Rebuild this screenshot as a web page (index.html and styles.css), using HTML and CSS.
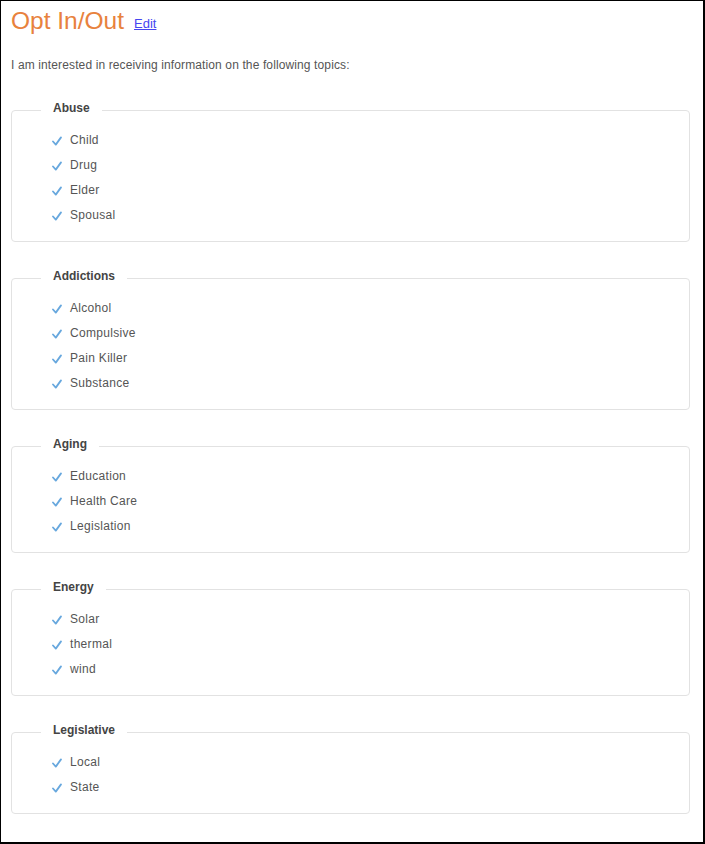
FILE: index.html
```html
<!DOCTYPE html>
<html>
<head>
<meta charset="utf-8">
<link rel="stylesheet" href="styles.css">
</head>
<body>
<div class="frame">
  <div class="header">
    <h1 class="title">Opt In/Out</h1>
    <a class="edit" href="#">Edit</a>
  </div>
  <p class="intro">I am interested in receiving information on the following topics:</p>

  <fieldset class="group">
    <legend>Abuse</legend>
    <ul class="items">
      <li><svg class="check" viewBox="0 0 10 10"><path d="M1 5.5 L3.8 8.6 L9 1.4"/></svg>Child</li>
      <li><svg class="check" viewBox="0 0 10 10"><path d="M1 5.5 L3.8 8.6 L9 1.4"/></svg>Drug</li>
      <li><svg class="check" viewBox="0 0 10 10"><path d="M1 5.5 L3.8 8.6 L9 1.4"/></svg>Elder</li>
      <li><svg class="check" viewBox="0 0 10 10"><path d="M1 5.5 L3.8 8.6 L9 1.4"/></svg>Spousal</li>
    </ul>
  </fieldset>

  <fieldset class="group">
    <legend>Addictions</legend>
    <ul class="items">
      <li><svg class="check" viewBox="0 0 10 10"><path d="M1 5.5 L3.8 8.6 L9 1.4"/></svg>Alcohol</li>
      <li><svg class="check" viewBox="0 0 10 10"><path d="M1 5.5 L3.8 8.6 L9 1.4"/></svg>Compulsive</li>
      <li><svg class="check" viewBox="0 0 10 10"><path d="M1 5.5 L3.8 8.6 L9 1.4"/></svg>Pain Killer</li>
      <li><svg class="check" viewBox="0 0 10 10"><path d="M1 5.5 L3.8 8.6 L9 1.4"/></svg>Substance</li>
    </ul>
  </fieldset>

  <fieldset class="group">
    <legend>Aging</legend>
    <ul class="items">
      <li><svg class="check" viewBox="0 0 10 10"><path d="M1 5.5 L3.8 8.6 L9 1.4"/></svg>Education</li>
      <li><svg class="check" viewBox="0 0 10 10"><path d="M1 5.5 L3.8 8.6 L9 1.4"/></svg>Health Care</li>
      <li><svg class="check" viewBox="0 0 10 10"><path d="M1 5.5 L3.8 8.6 L9 1.4"/></svg>Legislation</li>
    </ul>
  </fieldset>

  <fieldset class="group">
    <legend>Energy</legend>
    <ul class="items">
      <li><svg class="check" viewBox="0 0 10 10"><path d="M1 5.5 L3.8 8.6 L9 1.4"/></svg>Solar</li>
      <li><svg class="check" viewBox="0 0 10 10"><path d="M1 5.5 L3.8 8.6 L9 1.4"/></svg>thermal</li>
      <li><svg class="check" viewBox="0 0 10 10"><path d="M1 5.5 L3.8 8.6 L9 1.4"/></svg>wind</li>
    </ul>
  </fieldset>

  <fieldset class="group">
    <legend>Legislative</legend>
    <ul class="items">
      <li><svg class="check" viewBox="0 0 10 10"><path d="M1 5.5 L3.8 8.6 L9 1.4"/></svg>Local</li>
      <li><svg class="check" viewBox="0 0 10 10"><path d="M1 5.5 L3.8 8.6 L9 1.4"/></svg>State</li>
    </ul>
  </fieldset>
</div>
</body>
</html>
```

FILE: styles.css
```css
html, body {
  margin: 0;
  padding: 0;
  background: #fff;
}

body {
  font-family: "Liberation Sans", Arial, sans-serif;
  color: #555;
}

.frame {
  box-sizing: border-box;
  width: 705px;
  height: 844px;
  border-style: solid;
  border-color: #000;
  border-width: 1px 2px 2px 1px;
  padding: 0 13px 0 10px;
  overflow: hidden;
}

.header {
  display: flex;
  align-items: flex-start;
  gap: 10px;
  height: 43px;
}

.title {
  margin: 0;
  font-size: 24.5px;
  font-weight: normal;
  line-height: 40px;
  color: #e8823d;
}

.edit {
  margin-top: 15px;
  font-size: 13px;
  line-height: 15px;
  color: #4646f0;
  text-decoration: underline;
}

.intro {
  margin: 14px 0 0 0;
  font-size: 12px;
  line-height: 15px;
  letter-spacing: 0.12px;
  color: #555;
}

.group {
  margin: 28px 0 0 0;
  padding: 0 0 14px 0;
  border: 1px solid #e2e2e2;
  border-radius: 4px;
}

.group + .group {
  margin-top: 27px;
}

.group legend {
  margin-left: 29px;
  padding: 0 12px 4px 12px;
  font-size: 12px;
  font-weight: bold;
  line-height: 15px;
  color: #444;
}

.items {
  list-style: none;
  margin: 0;
  padding: 7px 0 0 40px;
}

.items li {
  display: flex;
  align-items: center;
  height: 25px;
  font-size: 12px;
  letter-spacing: 0.3px;
  color: #555;
}

.check {
  width: 10px;
  height: 10px;
  margin: 3px 8px 0 0;
  fill: none;
  stroke: #68a8de;
  stroke-width: 1.8;
  stroke-linecap: round;
  stroke-linejoin: round;
}
```
